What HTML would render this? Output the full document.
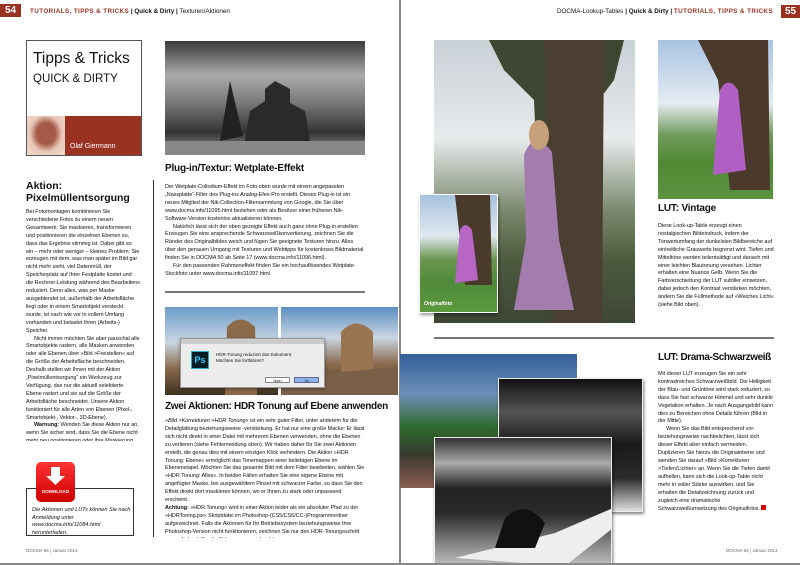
<!DOCTYPE html>
<html><head><meta charset="utf-8"><style>
*{margin:0;padding:0;box-sizing:border-box}
body{width:800px;height:565px;overflow:hidden;background:#fff;position:relative;font-family:"Liberation Sans",sans-serif;color:#111}
.a{position:absolute}
.red{color:#9a3222}
.hdr{font-size:6.3px;top:8px;white-space:nowrap;font-weight:bold}
.pn{background:#9a3222;color:#fff;font-weight:bold;font-size:10px;text-align:center;line-height:13px;height:13px}
.t{font-size:5.5px;line-height:7.9px;text-align:left;color:#111;overflow:hidden;letter-spacing:-0.05px}
.t p{text-indent:8px}
.img{overflow:hidden}
</style></head><body>
<!-- left page -->
<div class="a pn" style="left:0;top:4px;width:21px">54</div>
<div class="a hdr" style="left:30px"><span class="red" style="letter-spacing:.4px">TUTORIALS, TIPPS &amp; TRICKS</span> | Quick &amp; Dirty | <span style="font-weight:normal">Texturen/Aktionen</span></div>

<div class="a" style="left:26px;top:40px;width:116px;height:116px;border:1px solid #555">
 <div class="a" style="left:6px;top:9px;font-size:15.5px">Tipps &amp; Tricks</div>
 <div class="a" style="left:6px;top:32px;font-size:11.5px">QUICK &amp; DIRTY</div>
 <div class="a" style="left:0;top:75px;width:114px;height:39px;background:#9a3222"></div>
 <div class="a" style="left:0;top:75px;width:38px;height:39px;background:radial-gradient(ellipse at 50% 45%,#a55a48 0 35%,#e8c8b8 60%,#f2dcd2)"></div>
 <div class="a" style="left:43px;top:102px;font-size:7px;color:#fff">Olaf Giermann</div>
</div>

<div class="a img" style="left:165px;top:41px;width:200px;height:114px;background:linear-gradient(180deg,#3a3a3a,#aaa 30%,#777 55%,#333 80%,#999)">
 <svg width="200" height="114"><path d="M80 100 L85 70 L100 60 L100 48 L110 40 L125 48 L125 62 L140 70 L145 100Z" fill="#2a2a2a"/><path d="M55 100 L65 40 L78 95Z" fill="#222"/><rect x="0" y="100" width="200" height="14" fill="#888"/></svg>
</div>
<div class="a" style="left:165px;top:163px;font-size:10px;font-weight:bold;letter-spacing:-0.2px">Plug-in/Textur: Wetplate-Effekt</div>
<div class="a t" style="left:165px;top:184px;width:200px;height:95px">Der Wetplate-Collodium-Effekt im Foto oben wurde mit einem angepassten „Nassplatte“-Filter des Plug-ins Analog-Efex-Pro erstellt. Dieses Plug-in ist ein neues Mitglied der Nik-Collection-Filtersammlung von Google, die Sie über www.docma.info/11095.html beziehen oder als Besitzer einer früheren Nik-Software-Version kostenlos aktualisieren können.<p>Natürlich lässt sich der oben gezeigte Effekt auch ganz ohne Plug-in erstellen: Erzeugen Sie eine ansprechende Schwarzweißkonvertierung, zeichnen Sie die Ränder des Originalbildes weich und fügen Sie geeignete Texturen hinzu. Alles über den genauen Umgang mit Texturen und Webtipps für kostenloses Bildmaterial finden Sie in DOCMA 50 ab Seite 17 (www.docma.info/11096.html).</p><p>Für den passenden Rahmeneffekt finden Sie ein hochauflösendes Wetplate-Stockfoto unter www.docma.info/11097.html</p></div>
<div class="a" style="left:165px;top:291px;width:200px;height:2px;background:#777"></div>
<div class="a" style="left:153px;top:180px;width:1px;height:357px;background:#333"></div>

<div class="a img" style="left:165px;top:307px;width:113px;height:88px;background:linear-gradient(180deg,#6d9cc9,#c9d6e2 40%,#8a6a4c 70%,#3d3020)"><svg width="113" height="88"><path d="M60 88 L62 20 Q75 5 90 20 L92 88Z" fill="#8b6a4a"/></svg></div>
<div class="a img" style="left:281px;top:307px;width:117px;height:88px;background:linear-gradient(180deg,#5d8ec2,#c9d6e2 35%,#8a6a4c 65%,#4a3520)"><svg width="117" height="88"><path d="M60 88 L60 25 Q75 8 92 25 L92 88Z" fill="#9a7552"/><path d="M0 70 L117 60 L117 88 L0 88Z" fill="#7a6048"/></svg></div>
<div class="a" style="left:180px;top:338px;width:145px;height:50px;background:#ececec;border:1px solid #999;box-shadow:0 1px 3px rgba(0,0,0,.4)">
 <div style="height:5px;background:#ccc"></div>
 <div class="a" style="left:10px;top:12px;width:18px;height:18px;background:#001d26;border:1px solid #3ac;color:#3cf;font-size:9px;font-weight:bold;text-align:center;line-height:17px">Ps</div>
 <div class="a" style="left:35px;top:13px;font-size:4.5px;line-height:6px">HDR-Tonung reduziert das Dokument.<br>Möchten Sie fortfahren?</div>
 <div class="a" style="left:84px;top:38px;width:25px;height:6px;background:#fff;border:1px solid #888;font-size:4px;text-align:center">Nein</div>
 <div class="a" style="left:113px;top:38px;width:25px;height:6px;background:#8bb5e8;border:1px solid #669;font-size:4px;text-align:center">Ja</div>
</div>
<div class="a" style="left:165px;top:401px;font-size:10px;font-weight:bold;white-space:nowrap;letter-spacing:-0.3px">Zwei Aktionen: HDR Tonung auf Ebene anwenden</div>
<div class="a t" style="left:165px;top:418px;width:200px;height:120px"><i>»Bild &gt;Korrekturen &gt;HDR Tonung«</i> ist ein sehr guter Filter, unter anderem für die Detailglättung beziehungsweise -verstärkung. Er hat nur eine große Macke: Er lässt sich nicht direkt in einer Datei mit mehreren Ebenen verwenden, ohne die Ebenen zu verlieren (siehe Fehlermeldung oben). Wir haben daher für Sie zwei Aktionen erstellt, die genau dies mit einem einzigen Klick verhindern. Die Aktion »HDR Tonung: Ebene« ermöglicht das Tonemappen einer beliebigen Ebene im Ebenenstapel. Möchten Sie das gesamte Bild mit dem Filter bearbeiten, wählen Sie »HDR Tonung: Alles«. In beiden Fällen erhalten Sie eine eigene Ebene mit angefügter Maske, bei ausgewähltem Pinsel mit schwarzer Farbe, so dass Sie den Effekt direkt dort maskieren können, wo er Ihnen zu stark oder unpassend erscheint.<br><b>Achtung:</b> »HDR Tonung« wird in einer Aktion leider als ein absoluter Pfad zu der »HDRToning.jsx« Skriptdatei im Photoshop-(CS5/CS6/CC-)Programmordner aufgezeichnet. Falls die Aktionen für Ihr Betriebssystem beziehungsweise Ihre Photoshop-Version nicht funktionieren, zeichnen Sie nur den HDR-Tonungsschritt neu auf, damit Sie die Aktionen verwenden können.</div>

<div class="a" style="left:26px;top:180px;font-size:10.5px;font-weight:bold;line-height:12px">Aktion:<br>Pixelmüllentsorgung</div>
<div class="a t" style="left:26px;top:209px;width:114px;height:232px">Bei Fotomontagen kombinieren Sie verschiedene Fotos zu einem neuen Gesamtwerk: Sie maskieren, transformieren und positionieren die einzelnen Ebenen so, dass das Ergebnis stimmig ist. Dabei gibt es ein – mehr oder weniger – kleines Problem: Sie erzeugen mit dem, was man später im Bild gar nicht mehr sieht, viel Datenmüll, der Speicherplatz auf Ihrer Festplatte kostet und die Rechner-Leistung während des Bearbeitens reduziert. Denn alles, was per Maske ausgeblendet ist, außerhalb der Arbeitsfläche liegt oder in einem Smartobjekt versteckt wurde, ist nach wie vor in vollem Umfang vorhanden und belastet Ihren (Arbeits-) Speicher.<p>Nicht immer möchten Sie aber pauschal alle Smartobjekte rastern, alle Masken anwenden oder alle Ebenen über »Bild &gt;Freistellen« auf die Größe der Arbeitsfläche beschneiden. Deshalb stellen wir Ihnen mit der Aktion „Pixelmüllentsorgung“ ein Werkzeug zur Verfügung, das nur die aktuell selektierte Ebene rastert und sie auf die Größe der Arbeitsfläche beschneidet. Unsere Aktion funktioniert für alle Arten von Ebenen (Pixel-, Smartobjekt-, Vektor-, 3D-Ebene).</p><p><b>Warnung:</b> Wenden Sie diese Aktion nur an, wenn Sie sicher sind, dass Sie die Ebene nicht mehr neu positionieren oder ihre Maskierung ändern wollen.</p></div>
<div class="a" style="left:26px;top:488px;width:108px;height:48px;border:1px solid #333"></div>
<div class="a" style="left:36px;top:462px;width:39px;height:40px;border-radius:5px;background:linear-gradient(#f33,#c00);color:#fff;font-size:4.5px;font-weight:bold;text-align:center">
 <svg width="39" height="26"><path d="M15 5 H24 V14 H29 L19.5 23 L10 14 H15Z" fill="#fff"/></svg><div>DOWNLOAD</div></div>
<div class="a" style="left:32px;top:507px;width:100px;font-size:5.5px;line-height:7.5px;font-style:italic">Die Aktionen und LUTs können Sie nach Anmeldung unter www.docma.info/11084.html herunterladen.</div>
<div class="a" style="left:26px;top:548px;font-size:4.5px;color:#666">DOCMA 56 | Januar 2014</div>

<!-- divider -->
<div class="a" style="left:399px;top:0;width:2px;height:565px;background:#888"></div>

<!-- right page -->
<div class="a hdr" style="right:27px;text-align:right"><span style="font-weight:normal">DOCMA-Lookup-Tables</span> | Quick &amp; Dirty | <span class="red" style="letter-spacing:.4px">TUTORIALS, TIPPS &amp; TRICKS</span></div>
<div class="a pn" style="left:781px;top:5px;width:19px">55</div>

<div class="a img" style="left:434px;top:40px;width:201px;height:283px;background:linear-gradient(180deg,#c9d0d6,#e8ebec 35%,#7b8a6e 60%,#4d5a3e 78%,#3e4635)">
 <svg width="201" height="283"><path d="M55 0 H190 L180 40 L165 60 L160 283 H110 L100 60 L70 30Z" fill="#3d4630"/><path d="M110 0 H170 L168 283 H120Z" fill="#4b3e32"/><path d="M90 115 Q100 88 118 112 L125 200 L140 270 L80 270 L92 200Z" fill="#a27dae"/><ellipse cx="105" cy="95" rx="10" ry="15" fill="#c6a07a"/></svg>
</div>
<div class="a img" style="left:419px;top:194px;width:79px;height:119px;background:linear-gradient(180deg,#a7c2de,#e0e8ef 35%,#6b9650 55%,#4f8a3a 75%,#5d9a3e);box-shadow:1px 2px 3px rgba(0,0,0,.4);border:1px solid #fff">
 <svg width="79" height="119"><path d="M35 0 H70 L72 90 H45Z" fill="#4a3a2c"/><path d="M40 35 Q45 25 52 35 L58 85 L35 88Z" fill="#b866c4"/></svg>
 <div class="a" style="left:4px;top:106px;font-size:5px;color:#fff;font-style:italic;font-weight:bold">Originalfoto</div>
</div>
<div class="a img" style="left:658px;top:40px;width:115px;height:159px;background:linear-gradient(180deg,#a9c4e2,#e5ecf2 40%,#6f9a5a 60%,#4f8a34 78%,#5b9340)">
 <svg width="115" height="159"><path d="M40 0 H110 L112 150 H72 L60 40Z" fill="#4b3a2b"/><path d="M62 50 Q70 35 80 50 L88 130 L55 135Z" fill="#b060c4"/></svg>
</div>
<div class="a" style="left:658px;top:203px;font-size:10px;font-weight:bold;letter-spacing:-0.2px">LUT: Vintage</div>
<div class="a t" style="left:658px;top:223px;width:116px;height:94px">Diese Look-up-Table erzeugt einen nostalgischen Bildeindruck, indem der Tonwertumfang der dunkelsten Bildbereiche auf einheitliche Grauwerte begrenzt wird. Tiefen und Mitteltöne werden teilentsättigt und danach mit einer leichten Blautonung versehen. Lichter erhalten eine Nuance Gelb. Wenn Sie die Farbverschiebung der LUT subtiler einsetzen, dabei jedoch den Kontrast verstärken möchten, ändern Sie die Füllmethode auf »Weiches Licht« (siehe Bild oben).</div>
<div class="a" style="left:434px;top:337px;width:340px;height:2px;background:#777"></div>

<div class="a img" style="left:400px;top:354px;width:177px;height:134px;background:linear-gradient(180deg,#335f9a,#6d8fb8 30%,#2d6a2a 55%,#3a3a30 75%,#8a5e50)"></div>
<div class="a img" style="left:498px;top:378px;width:145px;height:134px;background:linear-gradient(180deg,#111,#555 25%,#1a1a1a 50%,#2a2a2a 75%,#ddd);box-shadow:1px 2px 3px rgba(0,0,0,.5);border:1px solid #eee"></div>
<div class="a img" style="left:434px;top:437px;width:178px;height:128px;background:linear-gradient(180deg,#333,#aaa 20%,#222 40%,#2a2a2a 60%,#888 85%,#bbb);box-shadow:1px 2px 3px rgba(0,0,0,.5);border:1px solid #eee">
 <svg width="178" height="128"><path d="M20 120 L120 95 L178 70 L178 90 L130 128Z" fill="#eee"/><path d="M70 80 Q90 60 110 85 L100 110 L60 110Z" fill="#111"/></svg>
</div>
<div class="a" style="left:658px;top:352px;font-size:10px;font-weight:bold;letter-spacing:-0.4px;white-space:nowrap">LUT: Drama-Schwarzweiß</div>
<div class="a t" style="left:658px;top:371px;width:116px;height:158px">Mit dieser LUT erzeugen Sie ein sehr kontrastreiches Schwarzweißbild. Die Helligkeit der Blau- und Grüntöne wird stark reduziert, so dass Sie fast schwarze Himmel und sehr dunkle Vegetation erhalten. Je nach Ausgangsbild kann dies zu Bereichen ohne Details führen (Bild in der Mitte).<p>Wenn Sie das Bild entsprechend vor- beziehungsweise nachbelichten, lässt sich dieser Effekt aber einfach vermeiden. Duplizieren Sie hierzu die Originalebene und wenden Sie darauf »Bild &gt;Korrekturen &gt;Tiefen/Lichter« an. Wenn Sie die Tiefen damit aufhellen, kann sich die Look-up-Table nicht mehr in voller Stärke auswirken, und Sie erhalten die Detailzeichnung zurück und zugleich eine dramatische Schwarzweißumsetzung des Originalfotos. <span style="display:inline-block;width:5px;height:5px;background:#d00"></span></p></div>
<div class="a" style="left:726px;top:548px;font-size:4.5px;color:#666">DOCMA 56 | Januar 2014</div>
<div class="a" style="left:0;top:563px;width:800px;height:2px;background:#888"></div>
</body></html>
